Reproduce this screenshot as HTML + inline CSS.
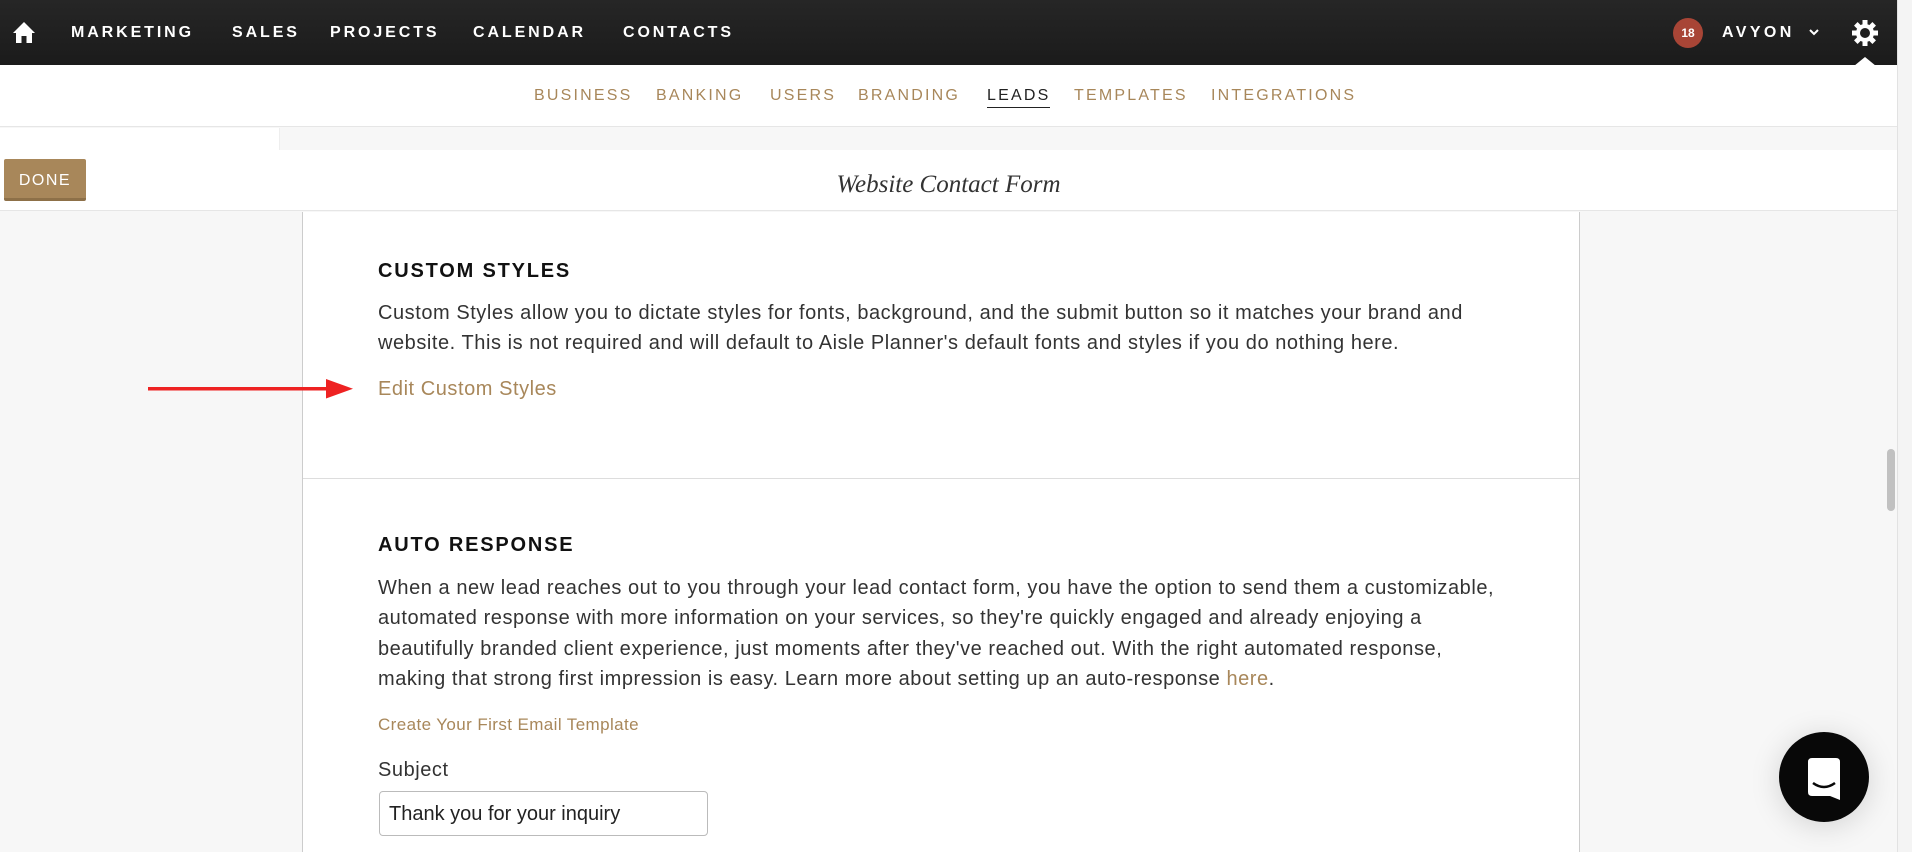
<!DOCTYPE html>
<html><head><meta charset="utf-8"><style>
*{margin:0;padding:0;box-sizing:border-box}
body{width:1912px;height:852px;overflow:hidden;background:#f7f7f7;font-family:"Liberation Sans",sans-serif;position:relative}
.top{position:absolute;left:0;top:0;width:1897px;height:65px;background:linear-gradient(#262626,#1b1b1b)}
.top span{position:absolute;top:24px;color:#fff;font-weight:bold;font-size:16px;letter-spacing:2.9px}
.sub{position:absolute;left:0;top:65px;width:1897px;height:62px;background:#fff;border-bottom:1px solid #e6e6e6}
.sub span{position:absolute;top:22px;color:#a8875a;font-size:16px;letter-spacing:2.2px}
.abs{position:absolute}
.card p{position:absolute;left:378px;font-size:20px;letter-spacing:0.55px;color:#333;white-space:nowrap}
.h{font-weight:bold;font-size:18.5px;letter-spacing:1.8px!important;color:#111!important}
</style></head><body>
<div class="top">
<svg class="abs" style="left:12px;top:20px" width="24" height="24" viewBox="0 0 24 24"><path d="M12 2 L23 13 H20 V23 H14.5 V16 H9.5 V23 H4 V13 H1 Z" fill="#fff"/></svg>
<span style="left:71px">MARKETING</span>
<span style="left:232px">SALES</span>
<span style="left:330px">PROJECTS</span>
<span style="left:473px">CALENDAR</span>
<span style="left:623px">CONTACTS</span>
<div class="abs" style="left:1673px;top:18px;width:30px;height:30px;border-radius:50%;background:#a84536;color:#fff;font-size:12px;font-weight:bold;text-align:center;line-height:30px">18</div>
<span style="left:1722px;letter-spacing:3.4px">AVYON</span>
<svg class="abs" style="left:1808px;top:28px" width="12" height="8"><path d="M2 2 L6 6 L10 2" stroke="#fff" stroke-width="2" fill="none"/></svg>
<svg class="abs" style="left:1851px;top:19px" width="28" height="28" viewBox="0 0 28 28"><g fill="#fff"><circle cx="14" cy="14" r="9"/><rect x="11.5" y="1" width="5" height="26"/><rect x="1" y="11.5" width="26" height="5"/><rect x="11.5" y="1" width="5" height="26" transform="rotate(45 14 14)"/><rect x="11.5" y="1" width="5" height="26" transform="rotate(-45 14 14)"/></g><circle cx="14" cy="14" r="5" fill="#1e1e1e"/></svg>
<div class="abs" style="left:1854px;top:57px;width:0;height:0;border-left:11px solid transparent;border-right:11px solid transparent;border-bottom:9px solid #fff"></div>
</div>
<div class="sub">
<span style="left:534px">BUSINESS</span>
<span style="left:656px">BANKING</span>
<span style="left:770px">USERS</span>
<span style="left:858px">BRANDING</span>
<span style="left:987px;color:#222;border-bottom:1px solid #222;padding-bottom:2px">LEADS</span>
<span style="left:1074px">TEMPLATES</span>
<span style="left:1211px">INTEGRATIONS</span>
</div>
<div class="abs" style="left:0;top:128px;width:280px;height:22px;background:#fff;border-right:1px solid #eee"></div>
<div class="abs" style="left:0;top:150px;width:1897px;height:61px;background:#fff;border-bottom:1px solid #e6e6e6"></div>
<div class="abs" style="left:4px;top:159px;width:82px;height:42px;background:#a8875a;border-bottom:3px solid #8d7048;border-radius:2px;color:#fff;font-size:16px;letter-spacing:1.5px;text-align:center;line-height:43px">DONE</div>
<div class="abs" style="left:0;top:171px;width:1897px;text-align:center;font-family:'Liberation Serif',serif;font-style:italic;font-size:25px;color:#333">Website Contact Form</div>
<div class="abs card" style="left:302px;top:212px;width:1278px;height:640px;background:#fff;border-left:1px solid #ccc;border-right:1px solid #ccc"></div>
<div class="abs" style="left:303px;top:478px;width:1276px;height:1px;background:#ddd"></div>
<div class="card">
<p class="h" style="top:260px">CUSTOM STYLES</p>
<p style="top:302px">Custom Styles allow you to dictate styles for fonts, background, and the submit button so it matches your brand and</p>
<p style="top:332px">website. This is not required and will default to Aisle Planner's default fonts and styles if you do nothing here.</p>
<p style="top:378px;color:#a8875a">Edit Custom Styles</p>
<p class="h" style="top:534px">AUTO RESPONSE</p>
<p style="top:577px">When a new lead reaches out to you through your lead contact form, you have the option to send them a customizable,</p>
<p style="top:607px">automated response with more information on your services, so they're quickly engaged and already enjoying a</p>
<p style="top:638px">beautifully branded client experience, just moments after they've reached out. With the right automated response,</p>
<p style="top:668px">making that strong first impression is easy. Learn more about setting up an auto-response <span style="color:#a8875a">here</span>.</p>
<p style="top:715px;font-size:17px;letter-spacing:0.4px;color:#a8875a">Create Your First Email Template</p>
<p style="top:759px">Subject</p>
</div>
<div class="abs" style="left:379px;top:791px;width:329px;height:45px;border:1px solid #bbb;border-radius:4px;font-size:20px;color:#222;padding:11px 9px">Thank you for your inquiry</div>
<svg class="abs" style="left:148px;top:378px" width="206" height="22"><rect x="0" y="9" width="180" height="3.5" fill="#ee2222"/><path d="M178 1 L205 10.75 L178 20.5 Z" fill="#ee2222"/></svg>
<div class="abs" style="left:1779px;top:732px;width:90px;height:90px;border-radius:50%;background:#080808;box-shadow:0 4px 30px rgba(0,0,0,.15)"></div>
<svg class="abs" style="left:1799px;top:752px" width="50" height="50" viewBox="0 0 50 50"><path d="M9 10 Q9 6 13 6 H37 Q41 6 41 10 V48 L31 44 H13 Q9 44 9 40 Z" fill="#fff"/><path d="M14 31 Q25 39 36 31" stroke="#080808" stroke-width="2.5" fill="none"/></svg>
<div class="abs" style="left:1897px;top:0;width:15px;height:852px;background:#f4f4f4;border-left:1px solid #e2e2e2"></div>
<div class="abs" style="left:1887px;top:449px;width:8px;height:62px;border-radius:4px;background:#c1c1c1"></div>
</body></html>
